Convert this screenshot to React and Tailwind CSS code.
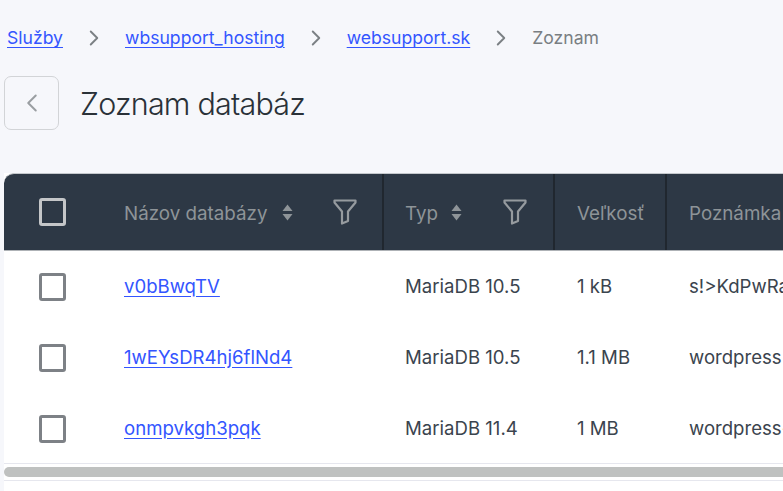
import React from 'react';
import { ChevronRight, ChevronLeft } from 'lucide-react';

const rows = [
  { name: 'v0bBwqTV', type: 'MariaDB 10.5', size: '1 kB', note: 's!>KdPwRa7mQx' },
  { name: '1wEYsDR4hj6flNd4', type: 'MariaDB 10.5', size: '1.1 MB', note: 'wordpress' },
  { name: 'onmpvkgh3pqk', type: 'MariaDB 11.4', size: '1 MB', note: 'wordpress-blog' },
];

function Crumb({ children }) {
  return <a className="text-[17.6px] leading-none text-[#3355ff] underline underline-offset-[3px]">{children}</a>;
}

function Sep() {
  return <ChevronRight className="w-[26px] h-[26px] text-[#7b8084] mx-[18px]" strokeWidth={1.75} />;
}

function Check({ dark }) {
  return <div className={`w-[27px] h-[28px] rounded-[3px] border-[3px] ${dark ? 'border-[#c4c6c8]' : 'border-[#7d8186] bg-white'}`} />;
}

function SortIcon() {
  return (
    <svg width="11" height="17" viewBox="0 0 11 17" className="block text-[#8e9498]" fill="currentColor">
      <path d="M5.5 0.5 L10.5 7 H0.5 Z" />
      <path d="M5.5 16.5 L10.5 10 H0.5 Z" />
    </svg>
  );
}

function FilterIcon() {
  return (
    <svg width="24" height="26" viewBox="0 0 24 26" className="block" fill="none" stroke="#969b9f" strokeWidth="2.2" strokeLinejoin="round">
      <path d="M1.5 1.5 H22.5 V3.5 L15 12.5 V22 L9 24.5 V12.5 L1.5 3.5 Z" />
    </svg>
  );
}

export default function App() {
  return (
    <div className="w-[783px] h-[491px] overflow-hidden bg-[#f6f7fb]" style={{ fontFamily: 'Inter, "Liberation Sans", sans-serif' }}>
      {/* Breadcrumb */}
      <div className="flex items-center h-[20px] mt-[28px] pl-[7px]">
        <Crumb>Služby</Crumb>
        <Sep />
        <Crumb>wbsupport_hosting</Crumb>
        <Sep />
        <Crumb>websupport.sk</Crumb>
        <Sep />
        <span className="text-[17.6px] leading-none text-[#797e82]">Zoznam</span>
      </div>

      {/* Title */}
      <div className="flex items-center mt-[28px] pl-[4px]">
        <button className="w-[55px] h-[54px] flex items-center justify-center rounded-[7px] border border-[#d2d4d7] bg-[#f6f7fb]">
          <ChevronLeft className="w-[30px] h-[30px] text-[#9a9ea2]" strokeWidth={1.6} />
        </button>
        <h1 className="ml-[21px] pt-[2px] text-[30.5px] tracking-[-0.8px] font-light text-[#2a3138] leading-none">Zoznam databáz</h1>
      </div>

      {/* Table */}
      <div className="mt-[43px] ml-[4px] w-[900px] bg-white">
        <div className="flex h-[78px] bg-[#2d3845] rounded-tl-[10px] border-t border-[#c4c8cc] border-b border-b-[#aeb2b6] text-[18.8px] text-[#8e9498]">
          <div className="w-[380px] shrink-0 flex items-center pl-[35px] border-r-2 border-[#20272f]">
            <Check dark />
            <span className="ml-[58px] pt-[4px]">Názov databázy</span>
            <span className="ml-[14px]"><SortIcon /></span>
            <span className="ml-[40px]"><FilterIcon /></span>
          </div>
          <div className="w-[171px] shrink-0 flex items-center pl-[21px] border-r-2 border-[#20272f]">
            <span className="pt-[4px]">Typ</span>
            <span className="ml-[13px]"><SortIcon /></span>
            <span className="ml-[41px]"><FilterIcon /></span>
          </div>
          <div className="w-[112px] shrink-0 flex items-center pl-[22px] pt-[4px] border-r-2 border-[#20272f]">Veľkosť</div>
          <div className="flex-1 flex items-center pl-[22px] pt-[4px]">Poznámka</div>
        </div>

        {rows.map((r) => (
          <div key={r.name} className="flex h-[71px] items-center text-[18.6px] text-[#3b444e]">
            <div className="w-[380px] shrink-0 flex items-center pl-[35px]">
              <Check />
              <a className="ml-[58px] text-[#3355ff] underline underline-offset-[3px]">{r.name}</a>
            </div>
            <div className="w-[171px] shrink-0 pl-[21px]">{r.type}</div>
            <div className="w-[112px] shrink-0 pl-[22px]">{r.size}</div>
            <div className="flex-1 pl-[22px] whitespace-nowrap">{r.note}</div>
          </div>
        ))}
      </div>

      {/* Scrollbar */}
      <div className="ml-[4px] bg-white border-t border-[#e6e7ee] border-b pt-[3px] pb-[2px] h-[18px] -mt-[1px]">
        <div className="h-[10px] rounded-l-full bg-[#bfc1c0]" />
      </div>
      <div className="ml-[4px] h-[20px] bg-white" />
    </div>
  );
}
